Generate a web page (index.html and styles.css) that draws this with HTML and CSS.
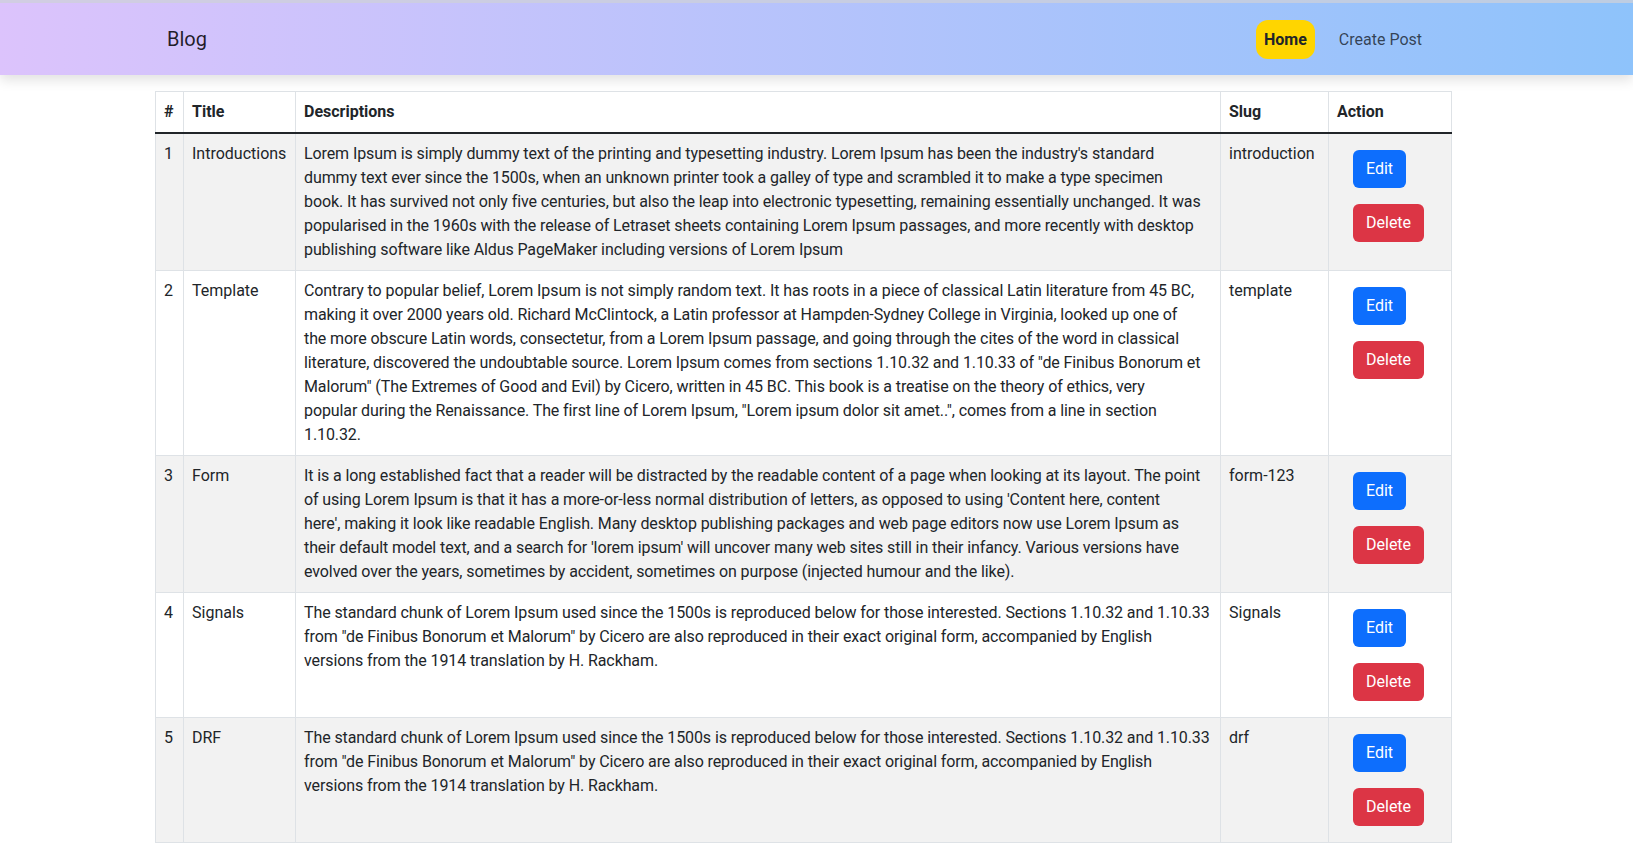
FILE: index.html
```html
<!DOCTYPE html>
<html lang="en">
<head>
<meta charset="utf-8">
<title>Blog</title>
<link rel="stylesheet" href="styles.css">
</head>
<body>
<nav class="navbar">
  <a class="brand" href="#">Blog</a>
  <ul class="nav-links">
    <li><a class="nav-link active" href="#">Home</a></li>
    <li><a class="nav-link" href="#">Create Post</a></li>
  </ul>
</nav>
<main class="page">
  <table class="posts">
    <colgroup>
      <col class="c-num">
      <col class="c-title">
      <col class="c-desc">
      <col class="c-slug">
      <col class="c-action">
    </colgroup>
    <thead>
      <tr><th>#</th><th>Title</th><th>Descriptions</th><th>Slug</th><th>Action</th></tr>
    </thead>
    <tbody>
      <tr>
        <td>1</td>
        <td>Introductions</td>
        <td class="desc">Lorem Ipsum is simply dummy text of the printing and typesetting industry. Lorem Ipsum has been the industry's standard<br>dummy text ever since the 1500s, when an unknown printer took a galley of type and scrambled it to make a type specimen<br>book. It has survived not only five centuries, but also the leap into electronic typesetting, remaining essentially unchanged. It was<br>popularised in the 1960s with the release of Letraset sheets containing Lorem Ipsum passages, and more recently with desktop<br>publishing software like Aldus PageMaker including versions of Lorem Ipsum</td>
        <td>introduction</td>
        <td><div class="actions"><a class="btn btn-edit" href="#">Edit</a><a class="btn btn-delete" href="#">Delete</a></div></td>
      </tr>
      <tr>
        <td>2</td>
        <td>Template</td>
        <td class="desc">Contrary to popular belief, Lorem Ipsum is not simply random text. It has roots in a piece of classical Latin literature from 45 BC,<br>making it over 2000 years old. Richard McClintock, a Latin professor at Hampden-Sydney College in Virginia, looked up one of<br>the more obscure Latin words, consectetur, from a Lorem Ipsum passage, and going through the cites of the word in classical<br>literature, discovered the undoubtable source. Lorem Ipsum comes from sections 1.10.32 and 1.10.33 of "de Finibus Bonorum et<br>Malorum" (The Extremes of Good and Evil) by Cicero, written in 45 BC. This book is a treatise on the theory of ethics, very<br>popular during the Renaissance. The first line of Lorem Ipsum, "Lorem ipsum dolor sit amet..", comes from a line in section<br>1.10.32.</td>
        <td>template</td>
        <td><div class="actions"><a class="btn btn-edit" href="#">Edit</a><a class="btn btn-delete" href="#">Delete</a></div></td>
      </tr>
      <tr>
        <td>3</td>
        <td>Form</td>
        <td class="desc">It is a long established fact that a reader will be distracted by the readable content of a page when looking at its layout. The point<br>of using Lorem Ipsum is that it has a more-or-less normal distribution of letters, as opposed to using 'Content here, content<br>here', making it look like readable English. Many desktop publishing packages and web page editors now use Lorem Ipsum as<br>their default model text, and a search for 'lorem ipsum' will uncover many web sites still in their infancy. Various versions have<br>evolved over the years, sometimes by accident, sometimes on purpose (injected humour and the like).</td>
        <td>form-123</td>
        <td><div class="actions"><a class="btn btn-edit" href="#">Edit</a><a class="btn btn-delete" href="#">Delete</a></div></td>
      </tr>
      <tr>
        <td>4</td>
        <td>Signals</td>
        <td class="desc">The standard chunk of Lorem Ipsum used since the 1500s is reproduced below for those interested. Sections 1.10.32 and 1.10.33<br>from "de Finibus Bonorum et Malorum" by Cicero are also reproduced in their exact original form, accompanied by English<br>versions from the 1914 translation by H. Rackham.</td>
        <td>Signals</td>
        <td><div class="actions"><a class="btn btn-edit" href="#">Edit</a><a class="btn btn-delete" href="#">Delete</a></div></td>
      </tr>
      <tr>
        <td>5</td>
        <td>DRF</td>
        <td class="desc">The standard chunk of Lorem Ipsum used since the 1500s is reproduced below for those interested. Sections 1.10.32 and 1.10.33<br>from "de Finibus Bonorum et Malorum" by Cicero are also reproduced in their exact original form, accompanied by English<br>versions from the 1914 translation by H. Rackham.</td>
        <td>drf</td>
        <td><div class="actions"><a class="btn btn-edit" href="#">Edit</a><a class="btn btn-delete" href="#">Delete</a></div></td>
      </tr>
    </tbody>
  </table>
</main>
</body>
</html>
```
FILE: styles.css
```css
* { box-sizing: border-box; }

body {
  margin: 0;
  font-family: Roboto, "Liberation Sans", sans-serif;
  font-size: 16px;
  line-height: 1.5;
  color: #212529;
  background: #fff;
}

a { text-decoration: none; }

.navbar {
  display: flex;
  align-items: center;
  justify-content: space-between;
  height: 75px;
  padding: 0 203px 0 167px;
  border-top: 3px solid rgba(205, 208, 218, 0.75);
  background: linear-gradient(90deg, #dcc3fc 0%, #8ec3fb 100%);
  background-origin: border-box;
  box-shadow: 0 5px 12px rgba(0, 0, 0, 0.12);
  position: relative;
}

.brand {
  font-size: 20px;
  line-height: 30px;
  color: rgba(0, 0, 0, 0.85);
}

.nav-links {
  display: flex;
  align-items: center;
  gap: 16px;
  margin: 0;
  padding: 0;
  list-style: none;
}

.nav-link {
  display: block;
  padding: 8px 8px;
  line-height: 23px;
  color: rgba(0, 0, 0, 0.68);
}

.nav-link.active {
  background: #ffd500;
  color: #212529;
  font-weight: 700;
  border-radius: 12px;
}

.page {
  padding: 16px 0 0 155px;
}

.posts {
  width: 1296px;
  border-collapse: collapse;
  table-layout: fixed;
}

.c-num { width: 28px; }
.c-title { width: 112px; }
.c-desc { width: 925px; }
.c-slug { width: 108px; }
.c-action { width: 123px; }

.posts th,
.posts td {
  padding: 8px;
  border: 1px solid #dee2e6;
  vertical-align: top;
  text-align: left;
}

.posts th {
  font-weight: 700;
  border-bottom: 2px solid #212529;
}

.posts td.desc {
  white-space: nowrap;
  letter-spacing: -0.1px;
}

.posts tbody tr:nth-child(odd) td {
  background: #f2f2f2;
}

.actions {
  display: flex;
  flex-direction: column;
  align-items: flex-start;
  gap: 16px;
  padding: 8px 0 8px 16px;
}

.btn {
  display: inline-block;
  padding: 6px 12px;
  border: 1px solid transparent;
  border-radius: 6px;
  color: #fff;
  line-height: 24px;
}

.btn-edit { background: #0d6efd; }
.btn-delete { background: #dc3545; }
```
